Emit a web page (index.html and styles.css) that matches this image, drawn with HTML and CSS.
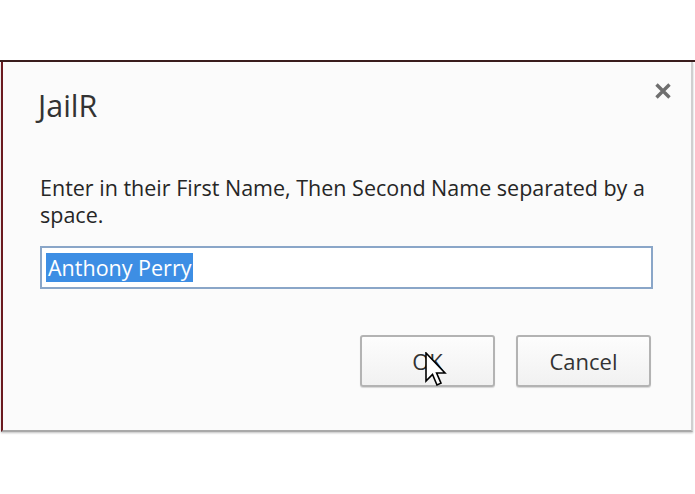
FILE: index.html
```html
<!DOCTYPE html>
<html>
<head>
<meta charset="utf-8">
<link rel="stylesheet" href="styles.css">
</head>
<body>
<div class="backdrop"></div>
<div class="dialog">
  <div class="title-row">
    <h1 class="title">JailR</h1>
    <svg class="close" width="16" height="16" viewBox="0 0 16 16"><path d="M1.5 1.5 L14.5 14.5 M14.5 1.5 L1.5 14.5" stroke="#6f6f6f" stroke-width="3.4" stroke-linecap="butt"/></svg>
  </div>
  <p class="message">Enter in their First Name, Then Second Name separated by a space.</p>
  <div class="field"><span class="selected">Anthony Perry</span></div>
  <div class="buttons">
    <div class="btn">OK</div>
    <div class="btn">Cancel</div>
  </div>
  <svg class="cursor" width="24" height="40" viewBox="0 0 24 40"><path d="M1 1 L1 29 L7.5 22.5 L12 33 L16 31.2 L11.6 21 L20 21 Z" fill="#fff" stroke="#000" stroke-width="1.6" stroke-linejoin="miter"/></svg>
</div>
</body>
</html>
```
FILE: styles.css
```css
html, body { margin: 0; padding: 0; background: #fff; }
body { width: 695px; height: 494px; position: relative; overflow: hidden; font-family: "Open Sans", "Noto Sans", sans-serif; }
.backdrop { height: 62px; border-bottom: 2px solid #3a1d1d; box-sizing: border-box; }
.dialog {
  position: relative;
  margin: 0 2px 0 1px;
  height: 370px;
  box-sizing: border-box;
  background: #fbfbfb;
  border-left: 2px solid #6b1a1f;
  border-right: 2px solid #cfcfcf;
  border-bottom: 2px solid #a9a9a9;
  box-shadow: 0 1px 2px rgba(0,0,0,0.25);
  padding: 0 38px 0 37px;
}
.title-row { display: flex; justify-content: space-between; align-items: flex-start; padding-top: 26px; }
.title { margin: 0 0 0 -2px; font-weight: 400; font-size: 30.5px; line-height: 34px; color: #333; }
.close { margin-top: -5px; margin-right: -18px; }
.message { margin: 52px 0 0 0; font-size: 21.5px; line-height: 27px; color: #262626; }
.field {
  margin-top: 18px;
  height: 43px;
  box-sizing: border-box;
  border: 2px solid #8aa6c8;
  background: #fff;
  padding: 5px 4px;
  display: flex; align-items: stretch;
}
.selected { background: #3d8ee4; color: #fff; font-size: 21.5px; line-height: 29px; padding: 0 2px 0 2px; }
.buttons { display: flex; justify-content: flex-end; gap: 21px; margin-top: 46px; margin-right: 2px; }
.btn {
  width: 135px; height: 52px; box-sizing: border-box;
  border: 2px solid #b3b3b3; border-radius: 3px;
  background: linear-gradient(#fdfdfd, #f1f1f1);
  box-shadow: 0 1px 1px rgba(0,0,0,0.15);
  display: flex; align-items: center; justify-content: center;
  font-size: 22px; color: #333;
}
.cursor { position: absolute; left: 422px; top: 290px; }
```
